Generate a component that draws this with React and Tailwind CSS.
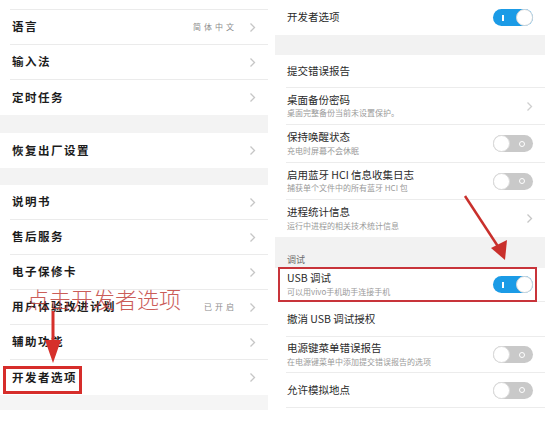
import React from "react";

const FONT = { fontFamily: '"Noto Sans CJK SC", "Noto Sans", sans-serif' };

function Chevron({ color = "#c6c6c6" }) {
  return (
    <svg width="7" height="11" viewBox="0 0 7 11" className="shrink-0">
      <polyline points="1.5,1.5 5.5,5.5 1.5,9.5" fill="none" stroke={color} strokeWidth="1.3" />
    </svg>
  );
}

function LRow({ label, value, last }) {
  return (
    <div className={"h-[35px] flex items-center ml-[10px] pl-[2px] pr-[12px] " + (last ? "" : "border-b border-[#ebebeb]")}>
      <span className="text-[11.5px] font-bold tracking-[1.5px] text-[#1c1c1c]">{label}</span>
      {value ? (
        <span className="ml-auto mr-[12px] text-[8px] tracking-[3px] text-[#8c8c8c]">{value}</span>
      ) : (
        <span className="ml-auto" />
      )}
      <Chevron />
    </div>
  );
}

function Toggle({ on }) {
  if (on) {
    return (
      <div className="w-[40px] h-[17px] rounded-full bg-[#1b9be6] relative flex items-center shrink-0">
        <div className="ml-[9px] w-[1.5px] h-[6px] bg-white" />
        <div className="absolute right-0 top-0 w-[17px] h-[17px] rounded-full bg-white border border-[#d8d8d8]" />
      </div>
    );
  }
  return (
    <div className="w-[40px] h-[17px] rounded-full bg-[#c9c9c9] relative flex items-center shrink-0">
      <div className="absolute left-0 top-0 w-[17px] h-[17px] rounded-full bg-white border border-[#dadada]" />
      <div className="ml-auto mr-[8px] w-[6px] h-[6px] rounded-full border-[1.5px] border-white" />
    </div>
  );
}

function RRow({ title, sub, right, h, last }) {
  return (
    <div
      className={"flex items-center ml-[11px] pl-[1px] pr-[12px] " + (last ? "" : "border-b border-[#ececec]")}
      style={{ height: h }}
    >
      <div className="flex flex-col leading-none">
        <span className="text-[10.5px] text-[#2a2a2a]">{title}</span>
        {sub && <span className="text-[8px] text-[#9a9a9a] mt-[4px]">{sub}</span>}
      </div>
      <div className="ml-auto flex items-center">{right}</div>
    </div>
  );
}

export default function App() {
  return (
    <div className="w-[545px] h-[423px] bg-white flex overflow-hidden relative" style={FONT}>
      {/* Left panel */}
      <div className="w-[268px] flex flex-col relative">
        <div className="h-[10px] ml-[10px] border-b border-[#ebebeb]" />
        <LRow label="语言" value="简体中文" />
        <LRow label="输入法" />
        <LRow label="定时任务" last />
        <div className="h-[18px] bg-[#f3f3f3]" />
        <LRow label="恢复出厂设置" last />
        <div className="h-[17px] bg-[#f3f3f3]" />
        <LRow label="说明书" />
        <LRow label="售后服务" />
        <LRow label="电子保修卡" />
        <LRow label="用户体验改进计划" value="已开启" />
        <LRow label="辅助功能" />
        <LRow label="开发者选项" last />
        <div className="h-[15px] bg-[#f5f5f5]" />

        {/* annotation text */}
        <div className="absolute left-[27px] top-[287px] text-[22px] leading-none font-light text-[#c2413c] opacity-85">
          点击开发者选项
        </div>
        {/* down arrow */}
        <svg className="absolute left-[44px] top-[311px]" width="18" height="53" viewBox="0 0 18 53">
          <rect x="7.5" y="0" width="3" height="33" fill="#d6302b" />
          <polygon points="1,29 17,29 9,52" fill="#d6302b" />
        </svg>
        {/* red box */}
        <div className="absolute left-[3px] top-[366px] w-[79px] h-[28px] border-[3px] border-[#d62d2a]" />
      </div>

      {/* gutter */}
      <div className="w-[7px]" />

      {/* Right panel */}
      <div className="flex-1 flex flex-col">
        <RRow title="开发者选项" h={35} right={<Toggle on />} last />
        <div className="h-[20px] bg-[#f2f2f2]" />
        <RRow title="提交错误报告" h={33} />
        <RRow title="桌面备份密码" sub="桌面完整备份当前未设置保护。" h={37} right={<Chevron color="#cfcfcf" />} />
        <RRow title="保持唤醒状态" sub="充电时屏幕不会休眠" h={38} right={<Toggle />} />
        <RRow title="启用蓝牙 HCI 信息收集日志" sub="捕获单个文件中的所有蓝牙 HCI 包" h={37} right={<Toggle />} />
        <RRow title="进程统计信息" sub="运行中进程的相关技术统计信息" h={37} right={<Chevron />} last />
        <div className="h-[31px] bg-[#f2f2f2] flex items-end pl-[12px] pb-[4px]">
          <span className="text-[9px] text-[#6a6a6a] leading-none">调试</span>
        </div>
        <RRow title="USB 调试" sub="可以用vivo手机助手连接手机" h={34} right={<Toggle on />} />
        <RRow title="撤消 USB 调试授权" h={35} />
        <RRow title="电源键菜单错误报告" sub="在电源键菜单中添加提交错误报告的选项" h={36} right={<Toggle />} />
        <RRow title="允许模拟地点" h={35} right={<Toggle />} />
      </div>

      {/* Right annotations */}
      <div className="absolute left-[278px] top-[267px] w-[259px] h-[35px] border-[2px] border-[#c8343a]" />
      <svg className="absolute left-[455px] top-[190px]" width="60" height="75" viewBox="0 0 60 75">
        <line x1="10" y1="6" x2="44" y2="58" stroke="#c9302c" strokeWidth="2.5" />
        <polygon points="36,58 52,50 50,70" fill="#c9302c" />
      </svg>
    </div>
  );
}
